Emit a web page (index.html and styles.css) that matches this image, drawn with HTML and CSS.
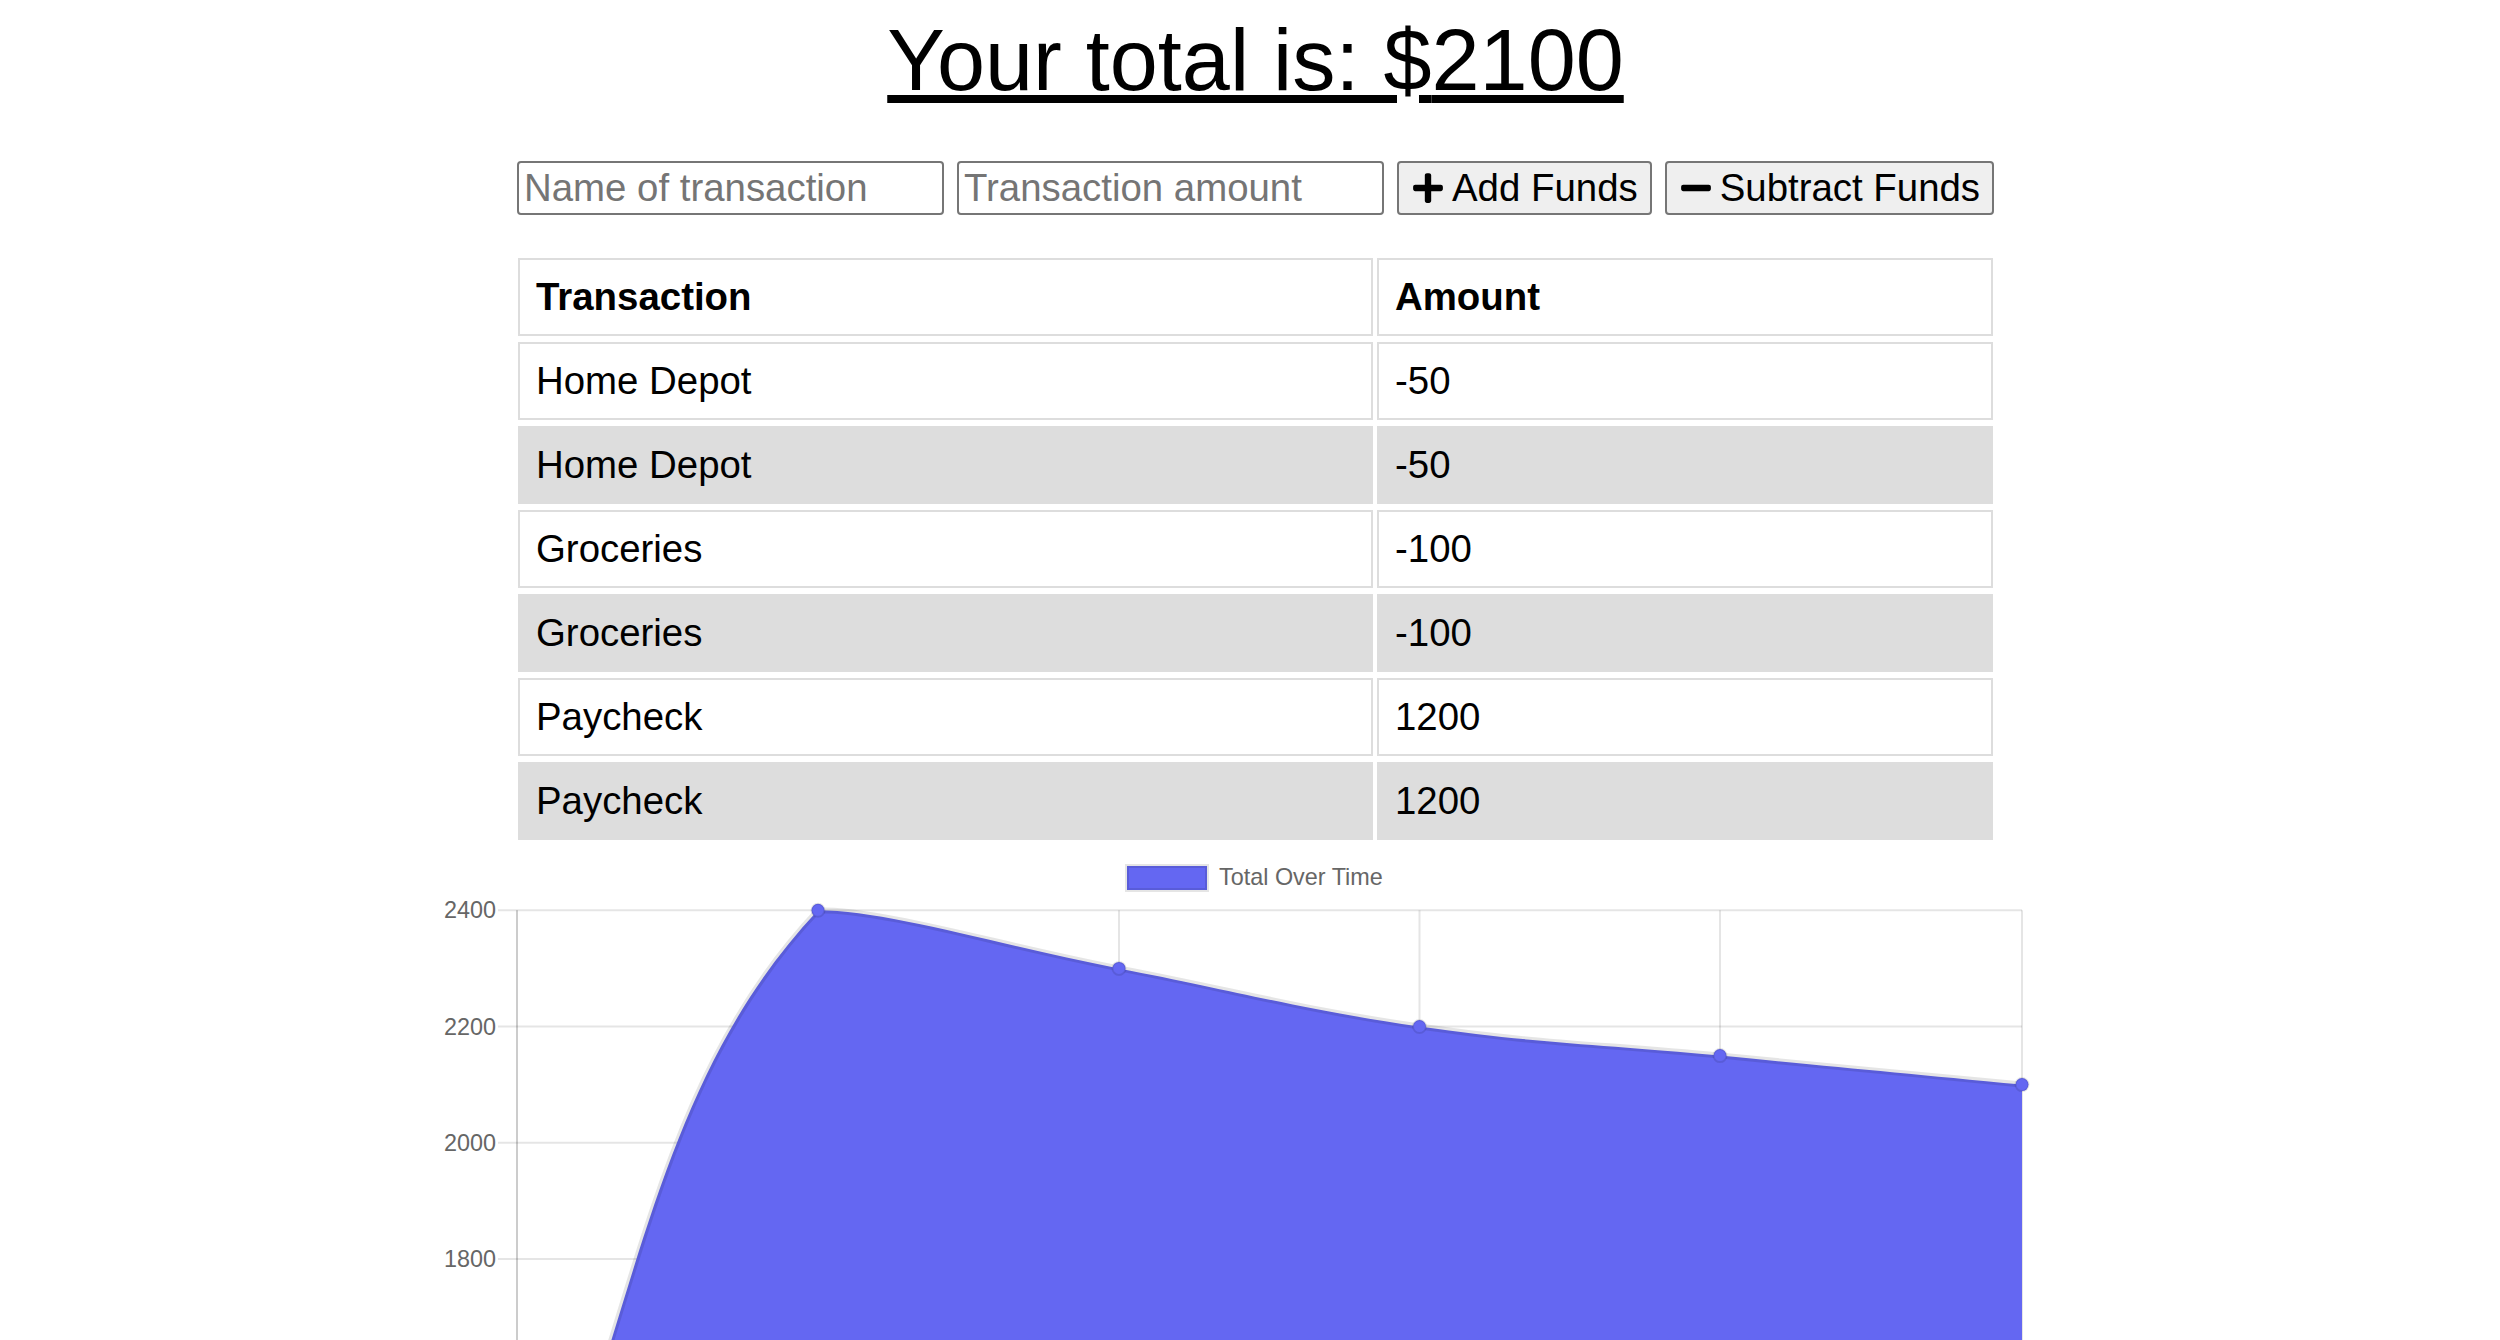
FILE: index.html
```html
<!DOCTYPE html>
<html lang="en">
<head>
<meta charset="utf-8">
<title>Budget Tracker</title>
<link rel="stylesheet" href="styles.css">
</head>
<body>
<div class="wrapper">
  <h1 class="total">Your total is: $<span id="total">2100</span></h1>
  <div class="form">
    <input class="field" type="text" id="t-name" placeholder="Name of transaction">
    <input class="field" type="number" id="t-amount" placeholder="Transaction amount">
    <button class="btn btn-add" id="add-btn"><svg class="icon" viewBox="0 0 448 512" aria-hidden="true"><path d="M416 208H272V64c0-17.670-14.33-32-32-32h-32c-17.67 0-32 14.33-32 32v144H32c-17.67 0-32 14.33-32 32v32c0 17.67 14.33 32 32 32h144v144c0 17.67 14.33 32 32 32h32c17.67 0 32-14.33 32-32V304h144c17.67 0 32-14.33 32-32v-32c0-17.67-14.33-32-32-32z"/></svg><span>Add Funds</span></button>
    <button class="btn btn-sub" id="sub-btn"><svg class="icon" viewBox="0 0 448 512" aria-hidden="true"><path d="M416 208H32c-17.67 0-32 14.33-32 32v32c0 17.67 14.33 32 32 32h384c17.67 0 32-14.33 32-32v-32c0-17.67-14.33-32-32-32z"/></svg><span>Subtract Funds</span></button>
  </div>
  <table class="transactions">
    <colgroup><col class="col-name"><col class="col-amount"></colgroup>
    <thead>
      <tr><th>Transaction</th><th>Amount</th></tr>
    </thead>
    <tbody id="tbody">
      <tr><td>Home Depot</td><td>-50</td></tr>
      <tr><td>Home Depot</td><td>-50</td></tr>
      <tr><td>Groceries</td><td>-100</td></tr>
      <tr><td>Groceries</td><td>-100</td></tr>
      <tr><td>Paycheck</td><td>1200</td></tr>
      <tr><td>Paycheck</td><td>1200</td></tr>
    </tbody>
  </table>
</div>
<svg class="chart" viewBox="0 846 2500 494" width="2500" height="494" aria-label="Total Over Time chart">
  <rect class="legend-box" x="1127" y="866" width="80" height="24"/>
  <text class="legend-text" x="1219" y="885">Total Over Time</text>

  <g class="grid">
    <line x1="498" y1="910.3" x2="2022" y2="910.3"/>
    <line x1="498" y1="1026.5" x2="2022" y2="1026.5"/>
    <line x1="498" y1="1142.7" x2="2022" y2="1142.7"/>
    <line x1="498" y1="1258.9" x2="2022" y2="1258.9"/>
    <line x1="818" y1="910.3" x2="818" y2="1340"/>
    <line x1="1119" y1="910.3" x2="1119" y2="1340"/>
    <line x1="1419.5" y1="910.3" x2="1419.5" y2="1340"/>
    <line x1="1720" y1="910.3" x2="1720" y2="1340"/>
    <line x1="2022" y1="910.3" x2="2022" y2="1340"/>
  </g>
  <line class="axis" x1="517" y1="910.3" x2="517" y2="1340"/>

  <g class="ticks">
    <text x="496" y="918.3">2400</text>
    <text x="496" y="1034.5">2200</text>
    <text x="496" y="1150.7">2000</text>
    <text x="496" y="1266.9">1800</text>
  </g>

  <path class="area" d="M517,1607.5 C637.4,1328.6 646.4,1092.4 818,910.3 C887.2,910.3 998.6,945.1 1119,968.4 C1239.2,991.6 1298.5,1008.9 1419.5,1026.5 C1538.9,1043.8 1599.8,1044 1720,1055.6 C1840.8,1067.3 1901.2,1073 2022,1084.6 L2022,1640 L517,1640 Z"/>
  <path class="line" d="M517,1607.5 C637.4,1328.6 646.4,1092.4 818,910.3 C887.2,910.3 998.6,945.1 1119,968.4 C1239.2,991.6 1298.5,1008.9 1419.5,1026.5 C1538.9,1043.8 1599.8,1044 1720,1055.6 C1840.8,1067.3 1901.2,1073 2022,1084.6"/>

  <g class="points">
    <circle cx="818" cy="910.3" r="6.5"/>
    <circle cx="1119" cy="968.4" r="6.5"/>
    <circle cx="1419.5" cy="1026.5" r="6.5"/>
    <circle cx="1720" cy="1055.6" r="6.5"/>
    <circle cx="2022" cy="1084.6" r="6.5"/>
  </g>
</svg>
</body>
</html>
```

FILE: styles.css
```css
html, body {
  margin: 0;
  padding: 0;
  background: #ffffff;
  overflow: hidden;
}

body {
  font-family: "Liberation Sans", Arial, Helvetica, sans-serif;
  font-size: 38.4px;
  color: #000000;
}

.wrapper {
  width: 1483px;
  margin: 0 auto;
  padding-left: 11px;
  text-align: center;
}

.total {
  margin: 10px 0 0;
  font-size: 86.4px;
  font-weight: normal;
  line-height: 100px;
  text-decoration: underline;
}

.form {
  display: flex;
  align-items: center;
  gap: 13px;
  margin-top: 51px;
  padding-left: 3px;
  height: 54px;
}

.field {
  box-sizing: border-box;
  width: 427px;
  height: 54px;
  margin: 0;
  padding: 3px 5px;
  border: 2px solid #767676;
  border-radius: 4px;
  background: #ffffff;
  font-family: "Liberation Sans", Arial, Helvetica, sans-serif;
  font-size: 38.4px;
  color: #000000;
  outline: none;
}

.field::placeholder {
  color: #757575;
  opacity: 1;
}

.btn {
  box-sizing: border-box;
  display: flex;
  align-items: center;
  gap: 9px;
  height: 54px;
  margin: 0;
  padding: 0 12px 0 14px;
  border: 2px solid #767676;
  border-radius: 4px;
  background: #efefef;
  font-family: "Liberation Sans", Arial, Helvetica, sans-serif;
  font-size: 38.4px;
  line-height: 44px;
  color: #000000;
  white-space: nowrap;
}

.icon {
  width: 30px;
  height: 34px;
  fill: #000000;
  flex: none;
}

.transactions {
  margin-top: 37px;
  width: 1483px;
  table-layout: fixed;
  border-collapse: separate;
  border-spacing: 4px 6px;
  text-align: left;
}

.col-name {
  width: 855px;
}

.col-amount {
  width: 616px;
}

.transactions th,
.transactions td {
  padding: 15px 16px;
  border: 2px solid #dddddd;
  line-height: 44px;
  font-size: 38.4px;
}

.transactions th {
  font-weight: bold;
}

.transactions tbody tr:nth-child(even) {
  background: #dddddd;
}

.chart {
  display: block;
}

.chart text {
  font-family: "Liberation Sans", Arial, Helvetica, sans-serif;
  font-size: 23.4px;
  fill: #666666;
}

.chart .ticks text {
  text-anchor: end;
}

.legend-box {
  fill: #6467f2;
  stroke: rgba(0, 0, 0, 0.1);
  stroke-width: 4;
}

.grid line {
  stroke: rgba(0, 0, 0, 0.1);
  stroke-width: 2;
}

.axis {
  stroke: rgba(0, 0, 0, 0.2);
  stroke-width: 2;
}

.area {
  fill: #6467f2;
}

.line {
  fill: none;
  stroke: rgba(0, 0, 0, 0.1);
  stroke-width: 6;
}

.points circle {
  fill: #6467f2;
  stroke: rgba(0, 0, 0, 0.1);
  stroke-width: 2;
}
```
